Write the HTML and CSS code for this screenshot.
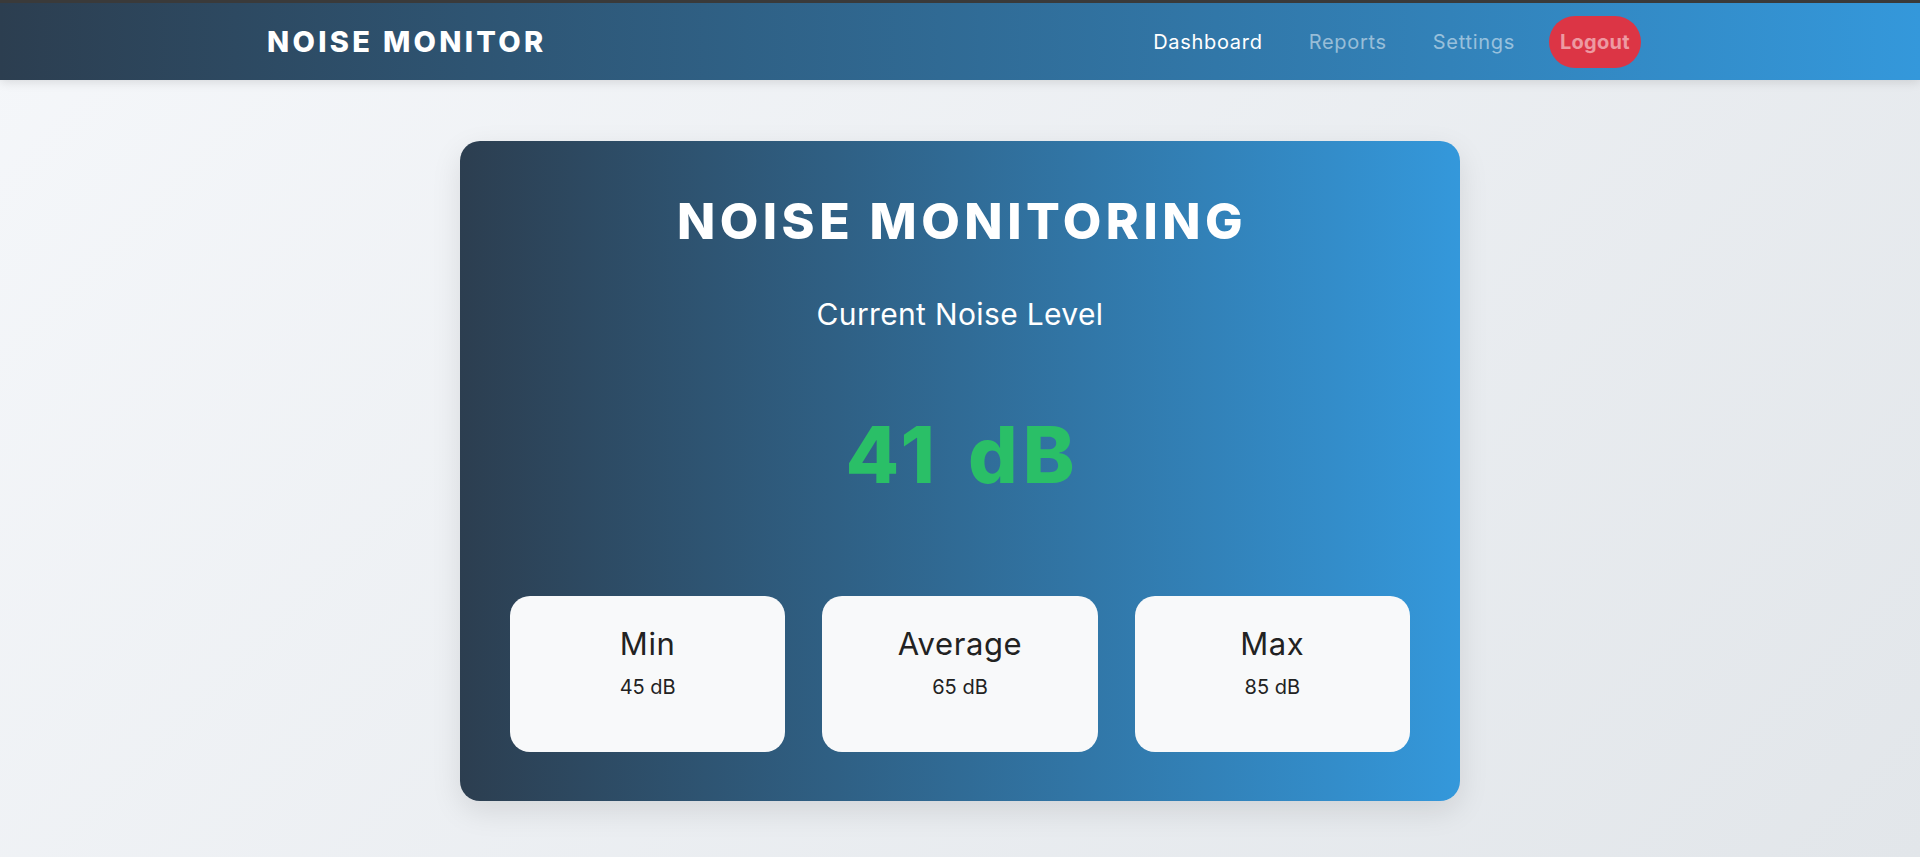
FILE: index.html
```html
<!DOCTYPE html>
<html lang="en">
<head>
<meta charset="utf-8">
<title>Noise Monitor</title>
<link rel="stylesheet" href="styles.css">
</head>
<body>
  <header class="navbar">
    <div class="nav-inner">
      <div class="logo">NOISE MONITOR</div>
      <nav class="nav-links">
        <a class="nav-link active" href="#">Dashboard</a>
        <a class="nav-link" href="#">Reports</a>
        <a class="nav-link" href="#">Settings</a>
        <a class="nav-link logout" href="#">Logout</a>
      </nav>
    </div>
  </header>
  <main class="main">
    <section class="monitor-card">
      <h1 class="monitor-title">NOISE MONITORING</h1>
      <h2 class="monitor-subtitle">Current Noise Level</h2>
      <div class="noise-value">41 dB</div>
      <div class="stats">
        <div class="stat-card">
          <h3 class="stat-label">Min</h3>
          <p class="stat-value">45 dB</p>
        </div>
        <div class="stat-card">
          <h3 class="stat-label">Average</h3>
          <p class="stat-value">65 dB</p>
        </div>
        <div class="stat-card">
          <h3 class="stat-label">Max</h3>
          <p class="stat-value">85 dB</p>
        </div>
      </div>
    </section>
  </main>
</body>
</html>
```

FILE: styles.css
```css
* {
  box-sizing: border-box;
}

html, body {
  margin: 0;
  padding: 0;
}

body {
  min-height: 857px;
  font-family: "Inter", "Noto Sans", sans-serif;
  background: linear-gradient(135deg, #f5f7fa 0%, #e2e6ea 100%);
  color: #222;
}

.navbar {
  height: 80px;
  border-top: 3px solid #3a3a3a;
  background: linear-gradient(90deg, #2c3e50 0%, #3498db 100%);
  box-shadow: 0 2px 10px rgba(0, 0, 0, 0.12);
}

.nav-inner {
  max-width: 1386px;
  height: 100%;
  margin: 0 auto;
  padding: 0 12px 0 0;
  display: flex;
  align-items: center;
  justify-content: space-between;
}

.logo {
  font-weight: 800;
  font-size: 29px;
  letter-spacing: 3.3px;
  color: #fff;
}

.nav-links {
  display: flex;
  align-items: center;
  gap: 22px;
}

.nav-link {
  display: block;
  padding: 12px;
  font-size: 20px;
  line-height: 28px;
  letter-spacing: 0.7px;
  color: rgba(255, 255, 255, 0.5);
  text-decoration: none;
}

.nav-link.active {
  color: #fff;
}

.nav-link.logout {
  background: #dc3545;
  color: rgba(255, 255, 255, 0.5);
  font-weight: 700;
  letter-spacing: 0.3px;
  border-radius: 30px;
  padding: 12px 11px;
}

.main {
  display: flex;
  justify-content: center;
  padding-top: 61px;
}

.monitor-card {
  width: 1000px;
  padding: 50px 50px 49px;
  border-radius: 20px;
  background: linear-gradient(90deg, #2c3e50 0%, #3498db 100%);
  box-shadow: 0 10px 30px rgba(0, 0, 0, 0.1);
  text-align: center;
  color: #fff;
}

.monitor-title {
  margin: 0;
  padding-left: 4px;
  font-size: 50px;
  line-height: 60px;
  font-weight: 800;
  letter-spacing: 4.5px;
}

.monitor-subtitle {
  margin: 43px 0 0;
  font-size: 30px;
  line-height: 40px;
  font-weight: 400;
  letter-spacing: 0.35px;
}

.noise-value {
  margin-top: 71px;
  padding-left: 5px;
  font-size: 78px;
  line-height: 100px;
  font-weight: 800;
  letter-spacing: 5px;
  word-spacing: 6px;
  color: #2abf67;
}

.stats {
  margin-top: 91px;
  display: grid;
  grid-template-columns: repeat(3, 1fr);
  gap: 37px;
}

.stat-card {
  background: #f8f9fa;
  border-radius: 20px;
  padding: 20px 20px 50px;
  color: #222;
}

.stat-label {
  margin: 0;
  font-size: 31px;
  line-height: 56px;
  font-weight: 400;
  letter-spacing: 0.6px;
}

.stat-value {
  margin: 0;
  font-size: 20px;
  line-height: 30px;
}
```
